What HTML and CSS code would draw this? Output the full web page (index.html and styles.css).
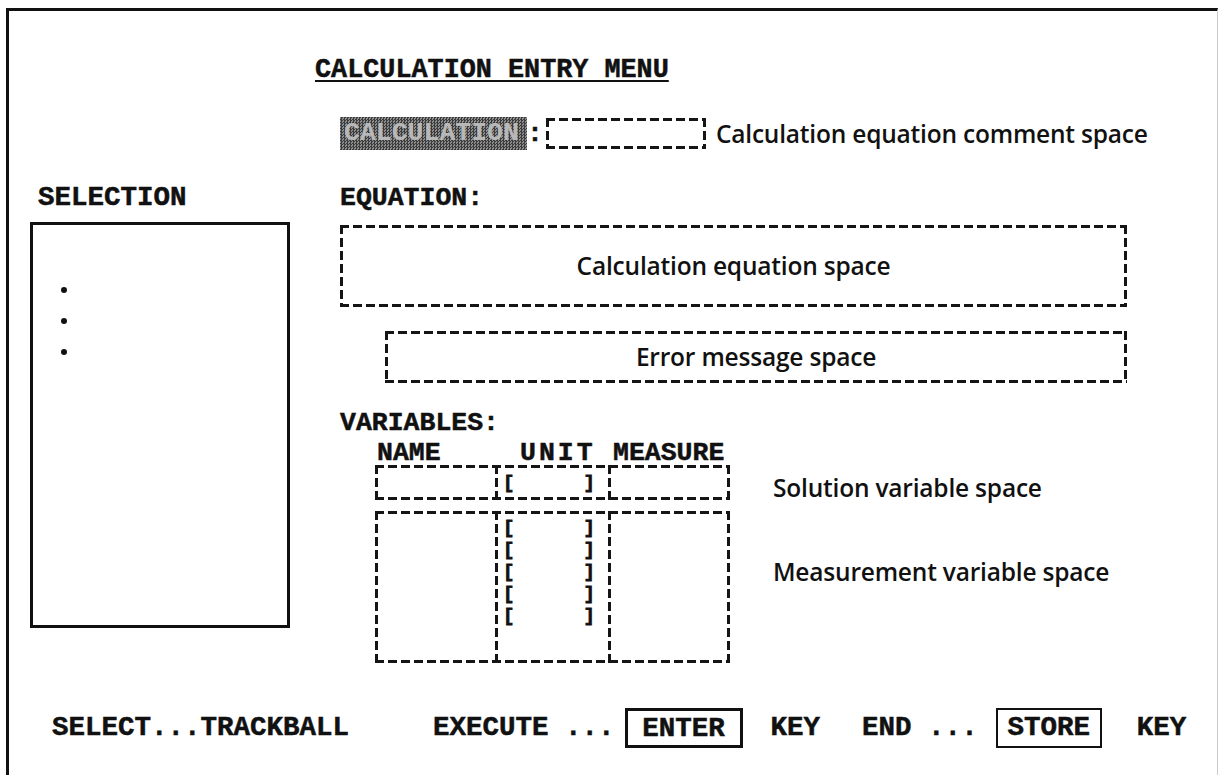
FILE: index.html
```html
<!DOCTYPE html>
<html lang="en">

<head>
    <meta charset="UTF-8">
    <meta name="viewport" content="width=device-width, initial-scale=1.0">
    <title>Calculation Entry Menu</title>
    <link rel="stylesheet" href="styles.css">
</head>

<body>
    <div class="frame">
        <h1 class="title">CALCULATION ENTRY MENU</h1>

        <div class="main">
            <div class="side">
                <div class="label sel-label">SELECTION</div>
                <div class="select-box">
                    <span class="dot"></span>
                    <span class="dot"></span>
                    <span class="dot"></span>
                </div>
            </div>

            <div class="work">
                <div class="calc-row">
                    <span class="hilite">CALCULATION</span><span class="colon">:</span>
                    <div class="dashed comment-box"></div>
                    <span class="note">Calculation equation comment space</span>
                </div>

                <div class="label eq-label">EQUATION:</div>
                <div class="dashed eq-box">
                    <span class="note">Calculation equation space</span>
                </div>
                <div class="dashed err-box">
                    <span class="note">Error message space</span>
                </div>

                <div class="label var-label">VARIABLES:</div>
                <div class="vars">
                    <div class="thead">
                        <span class="th-name">NAME</span>
                        <span class="th-unit">UNIT</span>
                        <span class="th-measure">MEASURE</span>
                    </div>

                    <div class="dashed trow solution-row">
                        <div class="cell name-cell"></div>
                        <div class="cell unit-cell">
                            <div class="brackets"><span>[</span><span>]</span></div>
                        </div>
                        <div class="cell measure-cell"></div>
                    </div>
                    <span class="note solution-note">Solution variable space</span>

                    <div class="dashed trow measure-row">
                        <div class="cell name-cell"></div>
                        <div class="cell unit-cell">
                            <div class="brackets"><span>[</span><span>]</span></div>
                            <div class="brackets"><span>[</span><span>]</span></div>
                            <div class="brackets"><span>[</span><span>]</span></div>
                            <div class="brackets"><span>[</span><span>]</span></div>
                            <div class="brackets"><span>[</span><span>]</span></div>
                        </div>
                        <div class="cell measure-cell"></div>
                    </div>
                    <span class="note measure-note">Measurement variable space</span>
                </div>
            </div>
        </div>

        <div class="footer">
            <span class="f-select">SELECT...TRACKBALL</span>
            <span class="f-execute">EXECUTE ...</span>
            <span class="key-box enter-key">ENTER</span>
            <span class="f-key1">KEY</span>
            <span class="f-end">END ...</span>
            <span class="key-box store-key">STORE</span>
            <span class="f-key2">KEY</span>
        </div>
    </div>
</body>

</html>
```

FILE: styles.css
```css
body {
    margin: 0;
    background-color: white;
    color: #111;
    font-family: "Liberation Mono", "Courier New", monospace;
}

.frame {
    box-sizing: border-box;
    height: 767px;
    margin: 8px 2px 0 6px;
    border-top: 3px solid #111;
    border-left: 3px solid #111;
    border-right: 1px solid #ccc;
}

.label,
.title,
.footer,
.thead,
.hilite,
.colon,
.brackets {
    font-family: "Liberation Mono", "Courier New", monospace;
    font-weight: bold;
    font-size: 26.5px;
    -webkit-text-stroke: 0.5px #111;
}

.title {
    margin: 44px 0 0 306px;
    font-size: 26.8px;
    line-height: 30px;
    text-decoration: underline;
    text-decoration-thickness: 2px;
    text-underline-offset: 3px;
}

.note {
    font-family: "Open Sans", "Noto Sans", sans-serif;
    font-weight: 600;
    font-size: 24.5px;
    line-height: 30px;
    letter-spacing: -0.2px;
    color: #111;
}

/* dashed outlines drawn as gradients so the dash length can match the print */
.dashed {
    box-sizing: border-box;
    background:
        linear-gradient(90deg, #151515 9px, transparent 9px) 0 0 / 13px 3px repeat-x,
        linear-gradient(90deg, #151515 9px, transparent 9px) 0 100% / 13px 3px repeat-x,
        linear-gradient(#151515 9px, transparent 9px) 0 0 / 3px 13px repeat-y,
        linear-gradient(#151515 9px, transparent 9px) 100% 0 / 3px 13px repeat-y;
}

.main {
    display: grid;
    grid-template-columns: 331px 1fr;
    margin-top: 32px;
}

/* left column */

.sel-label {
    margin: 67px 0 0 29px;
    font-size: 27.5px;
    line-height: 28px;
}

.select-box {
    box-sizing: border-box;
    width: 260px;
    height: 406px;
    margin: 10px 0 0 21px;
    padding: 62px 0 0 28px;
    border: 3px solid #111;
    display: flex;
    flex-direction: column;
    gap: 25px;
}

.dot {
    width: 6px;
    height: 6px;
    border-radius: 50%;
    background-color: #111;
}

/* right column */

.calc-row {
    display: flex;
    align-items: center;
    height: 33px;
}

.hilite {
    box-sizing: border-box;
    width: 187px;
    height: 33px;
    line-height: 33px;
    padding-left: 4px;
    color: #b8b8b8;
    -webkit-text-stroke: 0;
    background: repeating-conic-gradient(#3c3c3c 0 25%, #8c8c8c 0 50%) 0 0 / 3px 3px;
}

.colon {
    margin-left: 0;
}

.comment-box {
    width: 160px;
    height: 31px;
    margin-left: 3px;
}

.calc-row .note {
    margin-left: 10px;
}

.eq-label {
    margin-top: 34px;
    line-height: 28px;
}

.eq-box {
    width: 787px;
    height: 82px;
    margin-top: 13px;
    display: flex;
    align-items: center;
    justify-content: center;
}

.err-box {
    width: 742px;
    height: 52px;
    margin: 24px 0 0 45px;
    display: flex;
    align-items: center;
    justify-content: center;
}

.var-label {
    margin-top: 26px;
    line-height: 28px;
}

.vars {
    display: grid;
    grid-template-columns: 355px 1fr;
    column-gap: 43px;
    margin-left: 35px;
}

.thead {
    display: grid;
    grid-template-columns: 120px 113px 122px;
    line-height: 24px;
    margin-top: 4px;
}

.th-name {
    padding-left: 2px;
}

.th-unit {
    padding-left: 25px;
    letter-spacing: 3px;
}

.th-measure {
    padding-left: 5px;
}

.trow {
    display: grid;
    grid-template-columns: 120px 113px 122px;
}

.solution-row {
    grid-column: 1;
    height: 35px;
    margin-top: 0;
}

.measure-row {
    grid-column: 1;
    height: 152px;
    margin-top: 8px;
}

.cell + .cell {
    background: linear-gradient(#151515 9px, transparent 9px) 0 0 / 3px 13px repeat-y;
}

.unit-cell {
    padding: 0 13px 0 8px;
}

.solution-row .unit-cell {
    display: flex;
    flex-direction: column;
    justify-content: center;
}

.measure-row .unit-cell {
    padding-top: 6px;
}

.brackets {
    display: flex;
    justify-content: space-between;
    font-size: 19px;
    line-height: 22px;
    -webkit-text-stroke: 0.8px #111;
}

.solution-note {
    grid-column: 2;
    grid-row: 2;
    align-self: center;
    margin-top: 8px;
}

.measure-note {
    grid-column: 2;
    grid-row: 3;
    align-self: start;
    margin-top: 54px;
}

/* bottom key legend */

.footer {
    display: flex;
    align-items: center;
    height: 40px;
    margin-top: 45px;
    padding-left: 43px;
    font-size: 27.5px;
    line-height: 30px;
}

.f-execute {
    margin-left: 84px;
}

.key-box {
    box-sizing: border-box;
    height: 40px;
    line-height: 36px;
    text-align: center;
    border: 3px solid #111;
    -webkit-text-stroke: 0.5px #111;
}

.enter-key {
    width: 118px;
    margin-left: 10px;
}

.f-key1 {
    margin-left: 28px;
}

.f-end {
    margin-left: 42px;
}

.store-key {
    width: 106px;
    margin-left: 18px;
    border-width: 2px;
}

.f-key2 {
    margin-left: 35px;
}
```
